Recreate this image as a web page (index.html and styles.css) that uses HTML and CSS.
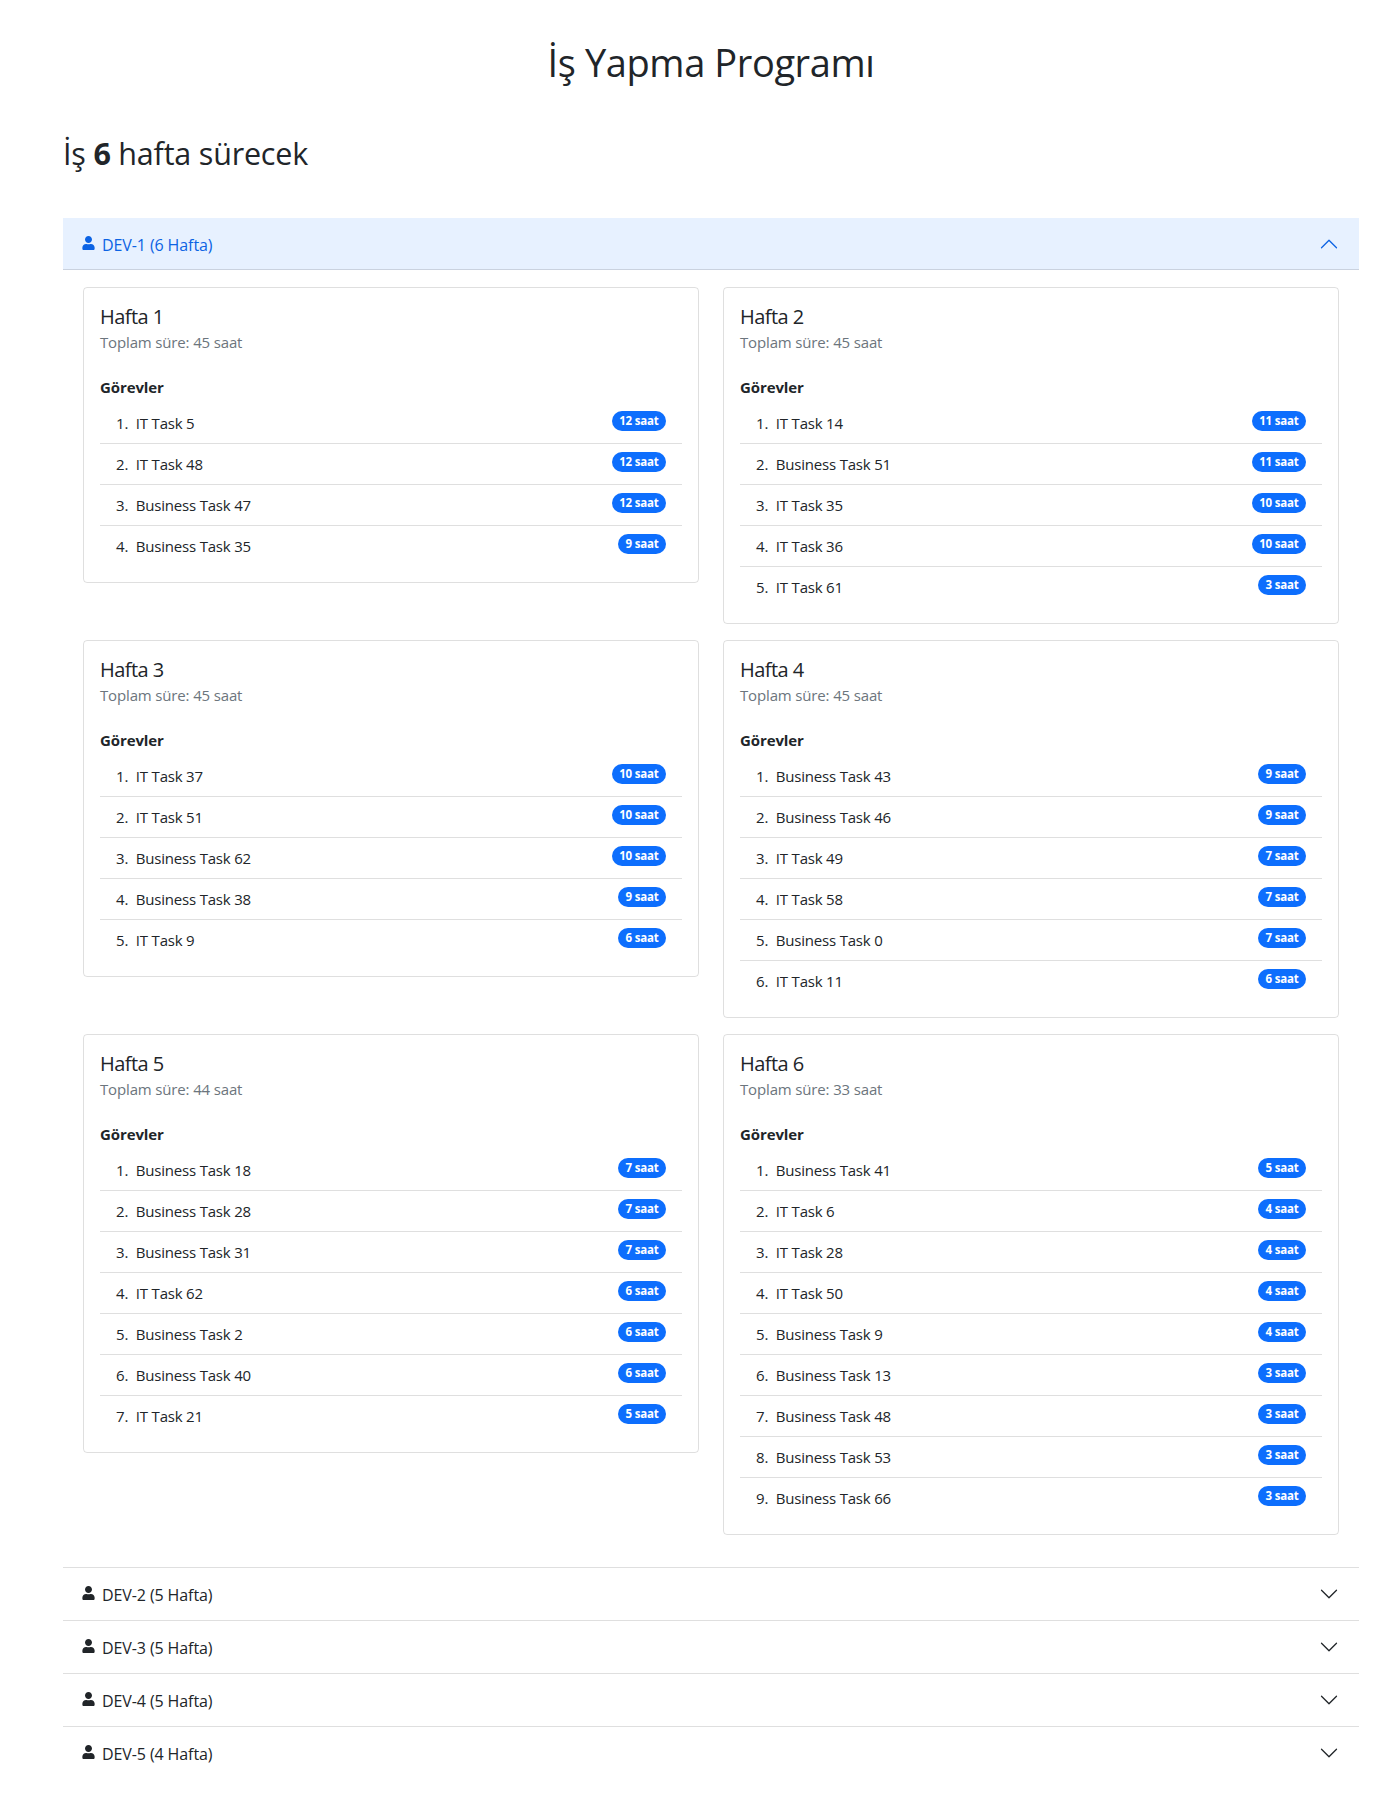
FILE: index.html
```html
<!DOCTYPE html>
<html lang="tr">
<head>
<meta charset="utf-8">
<title>İş Yapma Programı</title>
<link rel="stylesheet" href="styles.css">
</head>
<body>
<svg class="defs" width="0" height="0" aria-hidden="true">
  <symbol id="user" viewBox="0 0 448 512"><path fill="currentColor" d="M224 256c70.7 0 128-57.3 128-128S294.7 0 224 0 96 57.3 96 128s57.3 128 128 128zm89.6 32h-16.7c-22.2 10.2-46.9 16-72.9 16s-50.6-5.8-72.9-16h-16.7C60.2 288 0 348.2 0 422.4V464c0 26.5 21.5 48 48 48h352c26.5 0 48-21.5 48-48v-41.6c0-74.2-60.2-134.4-134.4-134.4z"/></symbol>
  <symbol id="chev" viewBox="0 0 16 16"><path fill="currentColor" fill-rule="evenodd" d="M1.646 4.646a.5.5 0 0 1 .708 0L8 10.293l5.646-5.647a.5.5 0 0 1 .708.708l-6 6a.5.5 0 0 1-.708 0l-6-6a.5.5 0 0 1 0-.708z"/></symbol>
</svg>
<main class="page">
  <h1 class="title">İş Yapma Programı</h1>
  <h2 class="summary">İş <strong>6</strong> hafta sürecek</h2>
  <section class="accordion">
    <div class="acc-item">
      <div class="acc-btn open"><svg class="user"><use href="#user"/></svg><span class="acc-label">DEV-1 (6 Hafta)</span><svg class="chev up"><use href="#chev"/></svg></div>
      <div class="acc-body">
        <article class="card">
          <h3 class="card-title">Hafta 1</h3><p class="card-sub">Toplam süre: 45 saat</p><h4 class="card-head">Görevler</h4>
          <ol class="tasks">
            <li><span class="task">IT Task 5</span><span class="badge">12 saat</span></li>
            <li><span class="task">IT Task 48</span><span class="badge">12 saat</span></li>
            <li><span class="task">Business Task 47</span><span class="badge">12 saat</span></li>
            <li><span class="task">Business Task 35</span><span class="badge">9 saat</span></li>
          </ol>
        </article>
        <article class="card">
          <h3 class="card-title">Hafta 2</h3><p class="card-sub">Toplam süre: 45 saat</p><h4 class="card-head">Görevler</h4>
          <ol class="tasks">
            <li><span class="task">IT Task 14</span><span class="badge">11 saat</span></li>
            <li><span class="task">Business Task 51</span><span class="badge">11 saat</span></li>
            <li><span class="task">IT Task 35</span><span class="badge">10 saat</span></li>
            <li><span class="task">IT Task 36</span><span class="badge">10 saat</span></li>
            <li><span class="task">IT Task 61</span><span class="badge">3 saat</span></li>
          </ol>
        </article>
        <article class="card">
          <h3 class="card-title">Hafta 3</h3><p class="card-sub">Toplam süre: 45 saat</p><h4 class="card-head">Görevler</h4>
          <ol class="tasks">
            <li><span class="task">IT Task 37</span><span class="badge">10 saat</span></li>
            <li><span class="task">IT Task 51</span><span class="badge">10 saat</span></li>
            <li><span class="task">Business Task 62</span><span class="badge">10 saat</span></li>
            <li><span class="task">Business Task 38</span><span class="badge">9 saat</span></li>
            <li><span class="task">IT Task 9</span><span class="badge">6 saat</span></li>
          </ol>
        </article>
        <article class="card">
          <h3 class="card-title">Hafta 4</h3><p class="card-sub">Toplam süre: 45 saat</p><h4 class="card-head">Görevler</h4>
          <ol class="tasks">
            <li><span class="task">Business Task 43</span><span class="badge">9 saat</span></li>
            <li><span class="task">Business Task 46</span><span class="badge">9 saat</span></li>
            <li><span class="task">IT Task 49</span><span class="badge">7 saat</span></li>
            <li><span class="task">IT Task 58</span><span class="badge">7 saat</span></li>
            <li><span class="task">Business Task 0</span><span class="badge">7 saat</span></li>
            <li><span class="task">IT Task 11</span><span class="badge">6 saat</span></li>
          </ol>
        </article>
        <article class="card">
          <h3 class="card-title">Hafta 5</h3><p class="card-sub">Toplam süre: 44 saat</p><h4 class="card-head">Görevler</h4>
          <ol class="tasks">
            <li><span class="task">Business Task 18</span><span class="badge">7 saat</span></li>
            <li><span class="task">Business Task 28</span><span class="badge">7 saat</span></li>
            <li><span class="task">Business Task 31</span><span class="badge">7 saat</span></li>
            <li><span class="task">IT Task 62</span><span class="badge">6 saat</span></li>
            <li><span class="task">Business Task 2</span><span class="badge">6 saat</span></li>
            <li><span class="task">Business Task 40</span><span class="badge">6 saat</span></li>
            <li><span class="task">IT Task 21</span><span class="badge">5 saat</span></li>
          </ol>
        </article>
        <article class="card">
          <h3 class="card-title">Hafta 6</h3><p class="card-sub">Toplam süre: 33 saat</p><h4 class="card-head">Görevler</h4>
          <ol class="tasks">
            <li><span class="task">Business Task 41</span><span class="badge">5 saat</span></li>
            <li><span class="task">IT Task 6</span><span class="badge">4 saat</span></li>
            <li><span class="task">IT Task 28</span><span class="badge">4 saat</span></li>
            <li><span class="task">IT Task 50</span><span class="badge">4 saat</span></li>
            <li><span class="task">Business Task 9</span><span class="badge">4 saat</span></li>
            <li><span class="task">Business Task 13</span><span class="badge">3 saat</span></li>
            <li><span class="task">Business Task 48</span><span class="badge">3 saat</span></li>
            <li><span class="task">Business Task 53</span><span class="badge">3 saat</span></li>
            <li><span class="task">Business Task 66</span><span class="badge">3 saat</span></li>
          </ol>
        </article>
      </div>
    </div>
    <div class="acc-item"><div class="acc-btn"><svg class="user"><use href="#user"/></svg><span class="acc-label">DEV-2 (5 Hafta)</span><svg class="chev"><use href="#chev"/></svg></div></div>
    <div class="acc-item"><div class="acc-btn"><svg class="user"><use href="#user"/></svg><span class="acc-label">DEV-3 (5 Hafta)</span><svg class="chev"><use href="#chev"/></svg></div></div>
    <div class="acc-item"><div class="acc-btn"><svg class="user"><use href="#user"/></svg><span class="acc-label">DEV-4 (5 Hafta)</span><svg class="chev"><use href="#chev"/></svg></div></div>
    <div class="acc-item"><div class="acc-btn"><svg class="user"><use href="#user"/></svg><span class="acc-label">DEV-5 (4 Hafta)</span><svg class="chev"><use href="#chev"/></svg></div></div>
  </section>
</main>
</body>
</html>
```
FILE: styles.css
```css
* { box-sizing: border-box; }
html, body { margin: 0; background: #fff; }
body {
  font-family: "Open Sans", "Noto Sans", sans-serif;
  font-size: 16px;
  line-height: 24px;
  color: #212529;
}
.defs { position: absolute; }
.page { padding: 38px 40px 40px 63px; }
.title {
  margin: 0 0 48px;
  font-size: 38px;
  line-height: 48px;
  font-weight: 400;
  text-align: center;
  letter-spacing: -0.4px;
}
.summary {
  margin: 0 0 46px;
  font-size: 30.5px;
  line-height: 38px;
  font-weight: 400;
  letter-spacing: -0.2px;
}
.summary strong { font-weight: 700; }
.acc-item + .acc-item { border-top: 1px solid rgba(0,0,0,.125); }
.acc-btn {
  display: flex;
  align-items: center;
  height: 52px;
  padding: 0 20px 0 19px;
  letter-spacing: -0.1px;
}
.acc-btn.open {
  background: #e7f1ff;
  color: #0c63e4;
  box-shadow: inset 0 -1px 0 rgba(0,0,0,.125);
}
.user { width: 13px; height: 14px; margin-right: 7px; margin-top: -2px; }
.acc-label { flex: 1; margin-top: 2px; }
.chev { width: 20px; height: 20px; margin-top: -1px; }
.chev.up { transform: rotate(180deg); }
.acc-body {
  display: grid;
  grid-template-columns: 1fr 1fr;
  column-gap: 24px;
  row-gap: 16px;
  align-items: start;
  padding: 17px 20px 32px;
}
.card {
  border: 1px solid rgba(0,0,0,.125);
  border-radius: 4px;
  padding: 17px 16px 16px;
}
.card-title {
  margin: 0 0 1px;
  font-size: 20px;
  line-height: 24px;
  font-weight: 400;
  letter-spacing: -0.55px;
}
.card-sub {
  margin: 0 0 23px;
  font-size: 15px;
  line-height: 24px;
  color: #6c757d;
  letter-spacing: -0.15px;
}
.card-head {
  margin: 0 0 6px;
  font-size: 15px;
  line-height: 20px;
  font-weight: 700;
  letter-spacing: -0.1px;
}
.tasks {
  list-style: none;
  margin: 0;
  padding: 0;
  counter-reset: task;
  font-size: 15px;
  letter-spacing: -0.2px;
}
.tasks li {
  display: flex;
  align-items: flex-start;
  padding: 8px 16px;
  counter-increment: task;
}
.tasks li + li { border-top: 1px solid rgba(0,0,0,.125); }
.tasks li::before { content: counter(task) ". "; white-space: pre; }
.task { flex: 1; margin-left: 4px; }
.badge {
  padding: 4px 7.5px;
  border-radius: 10px;
  background: #0d6efd;
  color: #fff;
  font-size: 11.5px;
  line-height: 12px;
  font-weight: 700;
  letter-spacing: -0.2px;
  white-space: nowrap;
}
```
